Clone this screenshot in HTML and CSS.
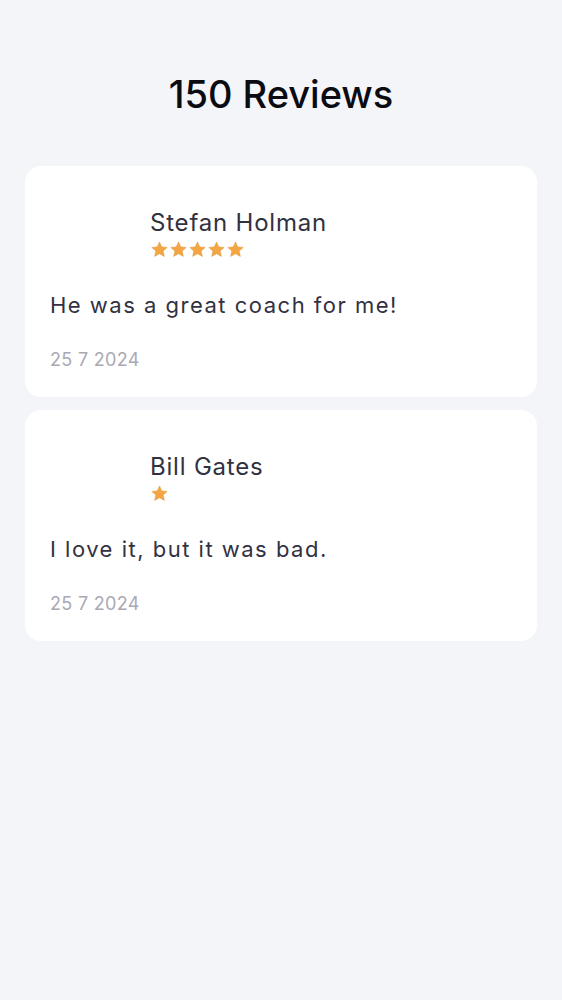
FILE: index.html
```html
<!DOCTYPE html>
<html>
<head>
<meta charset="utf-8">
<link rel="stylesheet" href="styles.css">
</head>
<body>
<main class="page">
  <h1 class="title">150 Reviews</h1>
  <section class="list">
    <article class="card">
      <header class="head">
        <div class="avatar"></div>
        <div class="who">
          <div class="name">Stefan Holman</div>
          <div class="stars">
            <svg class="star" viewBox="0 0 24 24"><path d="M12 2.5l2.9 6.2 6.8.7-5.1 4.6 1.5 6.7L12 17.3l-6.1 3.4 1.5-6.7-5.1-4.6 6.8-.7z"/></svg>
            <svg class="star" viewBox="0 0 24 24"><path d="M12 2.5l2.9 6.2 6.8.7-5.1 4.6 1.5 6.7L12 17.3l-6.1 3.4 1.5-6.7-5.1-4.6 6.8-.7z"/></svg>
            <svg class="star" viewBox="0 0 24 24"><path d="M12 2.5l2.9 6.2 6.8.7-5.1 4.6 1.5 6.7L12 17.3l-6.1 3.4 1.5-6.7-5.1-4.6 6.8-.7z"/></svg>
            <svg class="star" viewBox="0 0 24 24"><path d="M12 2.5l2.9 6.2 6.8.7-5.1 4.6 1.5 6.7L12 17.3l-6.1 3.4 1.5-6.7-5.1-4.6 6.8-.7z"/></svg>
            <svg class="star" viewBox="0 0 24 24"><path d="M12 2.5l2.9 6.2 6.8.7-5.1 4.6 1.5 6.7L12 17.3l-6.1 3.4 1.5-6.7-5.1-4.6 6.8-.7z"/></svg>
          </div>
        </div>
      </header>
      <p class="text">He was a great coach for me!</p>
      <p class="date">25 7 2024</p>
    </article>
    <article class="card">
      <header class="head">
        <div class="avatar"></div>
        <div class="who">
          <div class="name">Bill Gates</div>
          <div class="stars">
            <svg class="star" viewBox="0 0 24 24"><path d="M12 2.5l2.9 6.2 6.8.7-5.1 4.6 1.5 6.7L12 17.3l-6.1 3.4 1.5-6.7-5.1-4.6 6.8-.7z"/></svg>
          </div>
        </div>
      </header>
      <p class="text">I love it, but it was bad.</p>
      <p class="date">25 7 2024</p>
    </article>
  </section>
</main>
</body>
</html>
```
FILE: styles.css
```css
* { box-sizing: border-box; }
html, body { margin: 0; padding: 0; }
body {
  background: #f4f5f9;
  font-family: Inter, "Noto Sans", sans-serif;
  color: #32313f;
}
.page { padding: 0 25px; }
.title {
  margin: 0;
  padding-top: 71px;
  height: 166px;
  text-align: center;
  font-size: 38px;
  font-weight: 500;
  line-height: 46px;
  color: #0b0b12;
}
.list { display: flex; flex-direction: column; gap: 13px; }
.card {
  background: #fff;
  border-radius: 16px;
  padding: 25px 25px 25px;
}
.head { display: flex; align-items: center; gap: 20px; height: 80px; }
.avatar { width: 80px; height: 80px; flex: none; }
.who { display: flex; flex-direction: column; gap: 3px; padding-top: 4px; }
.name { font-size: 24px; line-height: 29px; font-weight: 400; letter-spacing: 0.8px; color: #32313f; }
.stars { display: flex; gap: 0; }
.star { width: 19px; height: 19px; fill: #f3a641; stroke: #e09336; stroke-width: 0.6; }
.text { margin: 19px 0 0; font-size: 22px; line-height: 30px; letter-spacing: 1.5px; color: #32313f; }
.date { margin: 28px 0 0; font-size: 18px; line-height: 24px; letter-spacing: 0.3px; color: #a9a9b3; }
```
